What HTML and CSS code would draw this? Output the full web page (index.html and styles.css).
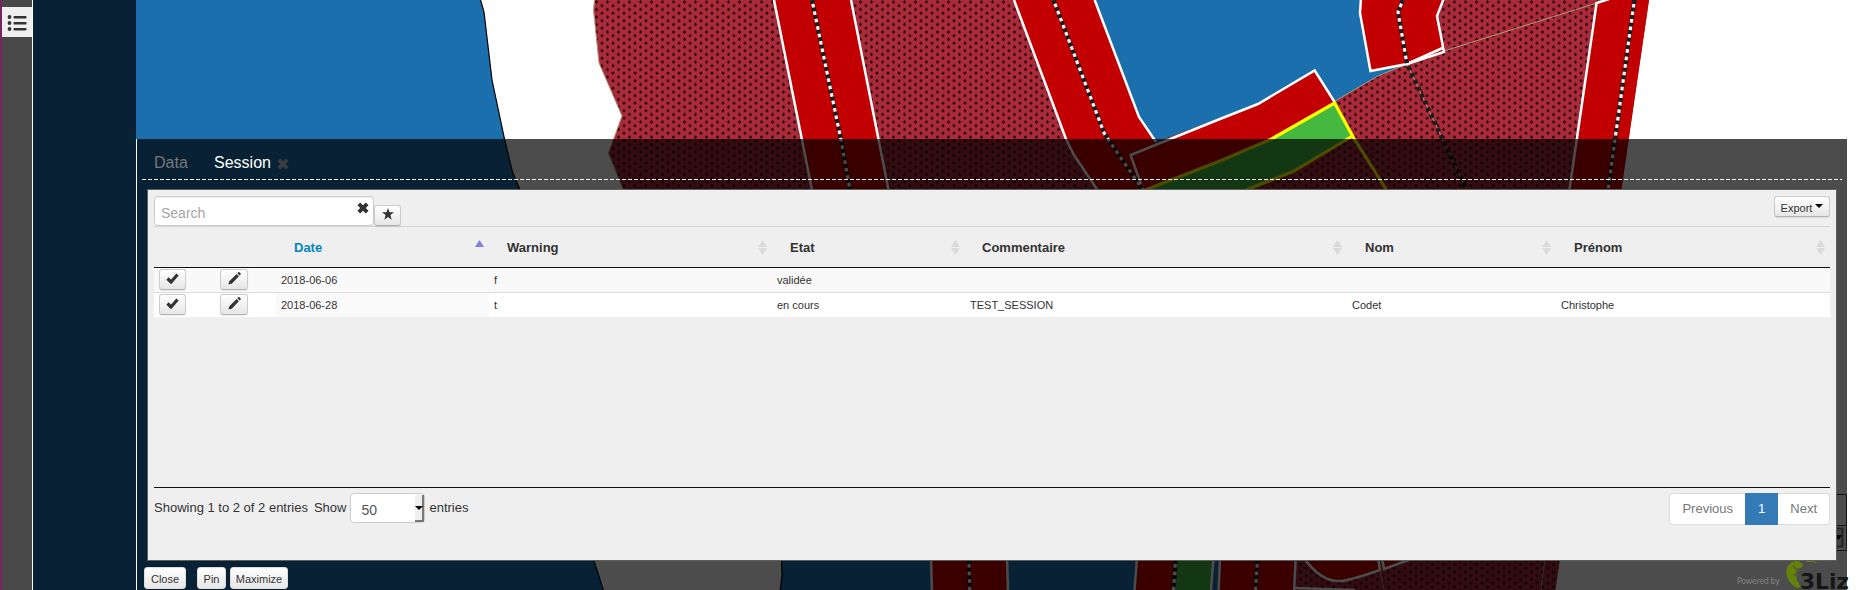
FILE: index.html
```html
<!DOCTYPE html>
<html lang="fr">
<head>
<meta charset="utf-8">
<title>Session</title>
<link rel="stylesheet" href="styles.css">
</head>
<body>
<svg class="map" viewBox="0 0 1857 590" width="1857" height="590">
  <defs>
    <pattern id="dots" width="11" height="7.5" patternUnits="userSpaceOnUse">
      <rect width="11" height="7.5" fill="#ab2a3a"/>
      <path d="M1 2h3M2.500.5v3M6.500 5.750h3M8 4.250v3" stroke="#16060a" stroke-width="1.200"/>
    </pattern>
  </defs>
  <path class="water" d="M-2-2H480L484 12 492 80 504.500 139 512.500 172 520 190 594 561 604 592H-2z"/>
  <path fill="url(#dots)" d="M594.500 0L593.500 10 599 63 622 116 608.500 153 623.500 190H1621L1649 0z"/>
  <path class="hair" d="M594.500 0L593.500 10 599 63 622 116 608.500 153 623.500 190"/>
  <path class="road" d="M774 0L812 190H888.500L851 0z"/>
  <path class="edge" d="M774 0L812 190M851 0L888.500 190"/>
  <path class="road" d="M1014 0L1066 139 1074 155 1097.500 190H1143L1156 142 1139 117 1094.700 0z"/>
  <path fill="#1c6fad" d="M1094.700 0L1139 117 1156 142 1258 104 1314.700 70.500 1334.600 102 1378 76 1407 64 1443 0z"/>
  <path class="edge" d="M1014 0L1066 139 1074 155 1097.500 190M1094.700 0L1139 117 1156 142"/>
  <path class="road" d="M1130.600 155L1220 119 1258 104 1314.700 70.500 1334.600 102 1271.600 139 1220 161 1143 190z"/>
  <path class="edge" d="M1143 190L1130.600 155 1220 119 1258 104 1314.700 70.500 1334.600 102"/>
  <path class="green" d="M1334.600 102L1271.600 139 1220 161 1143 190H1246L1293 171.500 1352.500 136z"/>
  <path class="yellow" d="M1145 190L1220 161 1271.600 139 1334.600 103 1352.500 136 1293 171.500 1246 190M1352.500 136L1386.500 190"/>
  <path class="hair" d="M1335 101L1378 76 1407 64 1466.600 190M1444 51L1597 3"/>
  <path class="road edge" d="M1361-2L1360 13 1370.500 71 1407 64 1444 52 1437 16 1444-2z"/>
  <path class="edge" d="M1407 64L1442.600 48"/>
  <path class="road" d="M1649 0L1621.400 190H1569.400L1596.600 3 1609 0z"/>
  <path class="edge" d="M1609-1L1596.600 3 1569.400 190"/>
  <path class="track" d="M812 0L841 140 850 190M1053.500 0L1104.500 134 1143 190M1403 0L1398 12 1407 64M1634.400 0L1608 190"/>
  <path class="ties" d="M812 0L841 140 850 190M1053.500 0L1104.500 134 1143 190M1403 0L1398 12 1407 64 1466.600 190M1634.400 0L1608 190"/>

  <path class="water" d="M781.500 558L782 575 780 592H1300V558z"/>
  <path class="road edge" d="M931 558L932 593H1008L1007 558z"/>
  <path class="road" d="M1137 558L1134.500 590H1173.500L1175.500 558z"/>
  <path class="green" d="M1175.500 558L1173.500 590H1211L1213.500 558z"/>
  <path class="edge" d="M1137 558L1134.500 590M1213.500 558L1211 590"/>
  <path fill="url(#dots)" d="M1295 558H1560L1555.500 590H1294z"/>
  <path class="road edge" d="M1220 558L1218.500 593H1294L1295.700 558z"/>
  <path class="road edge" d="M1304 558Q1321 582 1340 581 1348 581 1380 570L1378 558z"/>
  <path class="road edge" d="M1382 558L1384 569 1414 558z"/>
  <path class="edge" d="M1294 588L1355 590"/>
  <path class="hair" d="M1380 570L1384 590M1545 558L1541 590"/>
  <path class="track" d="M969 560L969.700 590M1175.500 560L1173.500 590M1257.500 560L1255.500 590"/>
  <path class="ties" d="M969 560L969.700 590M1175.500 560L1173.500 590M1257.500 560L1255.500 590"/>
  <path d="M1830 494.500H1846.500V550.500H1830M1830 525.500H1846" fill="none" stroke="#444" stroke-width="1"/>
  <path d="M1834 528.500H1842.500V546.500H1834" fill="#ddd" stroke="#777" stroke-width="2"/>
  <path d="M1835 535h7l-3.500 5z" fill="#000"/>
</svg>

<div class="app">
  <nav class="rail">
    <button class="rail-button" aria-label="Menu">
      <svg width="20" height="18" viewBox="0 0 20 18" fill="#333"><circle cx="2.500" cy="3" r="1.900"/><circle cx="2.500" cy="9" r="1.900"/><circle cx="2.500" cy="15" r="1.900"/><rect x="6.500" y="2" width="13" height="2.500" rx=".8"/><rect x="6.500" y="8" width="13" height="2.500" rx=".8"/><rect x="6.500" y="14" width="13" height="2.500" rx=".8"/></svg>
    </button>
  </nav>
  <aside class="side"></aside>
  <main class="dock">
    <header class="tabs">
      <span class="tab">Data</span>
      <span class="tab active">Session</span>
      <svg class="tab-close" width="12" height="12" viewBox="0 0 10 10"><path d="M1.500 1.500l7 7M8.500 1.500l-7 7" stroke="#3a3d40" stroke-width="3.200"/></svg>
    </header>
    <section class="panel">
      <div class="toolbar">
        <div class="search"><span>Search</span><svg width="12" height="12" viewBox="0 0 10 10"><path d="M1.500 1.500l7 7M8.500 1.500l-7 7" stroke="#333" stroke-width="3.200"/></svg></div>
        <button class="btn star"><svg width="12" height="12" viewBox="0 0 12 12"><path d="M6 0l1.500 4.300H12L8.400 7l1.300 4.700L6 9 2.300 11.700 3.600 7 0 4.300h4.500z" fill="#333"/></svg></button>
        <button class="btn export">Export <i></i></button>
      </div>
      <table class="grid">
        <colgroup><col class="c1"><col class="c2"><col class="c3"><col class="c4"><col class="c5"><col class="c6"><col class="c7"><col></colgroup>
        <thead><tr>
          <th></th><th></th>
          <th class="sorted"><div>Date<svg width="9" height="15" viewBox="0 0 9 15"><path d="M0 7L4.500 0 9 7z" fill="#7f7fdf"/></svg></div></th>
          <th><div>Warning<svg width="9" height="15" viewBox="0 0 9 15"><path d="M0 7L4.500 0 9 7zM0 8h9l-4.500 7z" fill="#dadada"/></svg></div></th>
          <th><div>Etat<svg width="9" height="15" viewBox="0 0 9 15"><path d="M0 7L4.500 0 9 7zM0 8h9l-4.500 7z" fill="#dadada"/></svg></div></th>
          <th><div>Commentaire<svg width="9" height="15" viewBox="0 0 9 15"><path d="M0 7L4.500 0 9 7zM0 8h9l-4.500 7z" fill="#dadada"/></svg></div></th>
          <th><div>Nom<svg width="9" height="15" viewBox="0 0 9 15"><path d="M0 7L4.500 0 9 7zM0 8h9l-4.500 7z" fill="#dadada"/></svg></div></th>
          <th><div>Prénom<svg width="9" height="15" viewBox="0 0 9 15"><path d="M0 7L4.500 0 9 7zM0 8h9l-4.500 7z" fill="#dadada"/></svg></div></th>
        </tr></thead>
        <tbody>
          <tr>
            <td><button class="btn row-btn"><svg width="13" height="11" viewBox="0 0 13 11"><path d="M1.500 5.500l3.500 3.500L11.500 1.500" fill="none" stroke="#333" stroke-width="3.200"/></svg></button></td>
            <td><button class="btn row-btn wide"><svg width="13" height="13" viewBox="0 0 13 13"><path d="M.5 12.500l.8-3.200L8.700 2l2.200 2.200L3.700 11.700zM9.300 1.300l1-1q.6-.5 1.200 0l1.100 1.100q.5.600 0 1.200l-1 1z" fill="#333"/></svg></button></td>
            <td>2018-06-06</td><td>f</td><td>validée</td><td></td><td></td><td></td>
          </tr>
          <tr>
            <td><button class="btn row-btn"><svg width="13" height="11" viewBox="0 0 13 11"><path d="M1.500 5.500l3.500 3.500L11.500 1.500" fill="none" stroke="#333" stroke-width="3.200"/></svg></button></td>
            <td><button class="btn row-btn wide"><svg width="13" height="13" viewBox="0 0 13 13"><path d="M.5 12.500l.8-3.200L8.700 2l2.200 2.200L3.700 11.700zM9.300 1.300l1-1q.6-.5 1.200 0l1.100 1.100q.5.600 0 1.200l-1 1z" fill="#333"/></svg></button></td>
            <td>2018-06-28</td><td>t</td><td>en cours</td><td>TEST_SESSION</td><td>Codet</td><td>Christophe</td>
          </tr>
        </tbody>
      </table>
      <footer class="foot">
        <span class="info">Showing 1 to 2 of 2 entries</span>
        <span>Show</span>
        <div class="select"><span>50</span><b><i></i></b></div>
        <span>entries</span>
        <div class="pager"><span>Previous</span><span class="current">1</span><span>Next</span></div>
      </footer>
    </section>
    <div class="actions">
      <button class="btn close">Close</button><button class="btn pin">Pin</button><button class="btn max">Maximize</button>
      <svg class="credits" width="115" height="29" viewBox="0 0 115 29">
        <path d="M59 0C46 2 46 19 60 27L64 26C57 17 58 10 67 5L62 0zM68 0h9q3 1 3 3-4-3-9-2z" fill="#648208"/>
        <path d="M56 5l3 3h4l4-3M60 8v4l-3 3M61 8l4 3" fill="none" stroke="#4c4c4c" stroke-width="1.200"/>
        <text x="0" y="23" class="powered" textLength="43">Powered by</text>
        <text x="63" y="28" class="brand" textLength="49" lengthAdjust="spacingAndGlyphs">3Liz</text>
      </svg>
    </div>
  </main>
</div>
</body>
</html>
```
FILE: styles.css
```css
* { box-sizing: border-box; }
body {
  margin: 0;
  width: 1857px;
  height: 590px;
  overflow: hidden;
  background: #fff;
  color: #333;
  font: 13px "Liberation Sans", Arial, sans-serif;
}

/* Map canvas behind the application */
.map { position: absolute; left: 0; top: 0; }
.water { fill: #1c6fad; stroke: #000; stroke-width: 1.2; }
.road { fill: #c20002; }
.edge { stroke: #fff; stroke-width: 2.5; }
.edge:not(.road) { fill: none; }
.green { fill: #45b840; }
.yellow { fill: none; stroke: #ff0; stroke-width: 3.2; }
.hair { fill: none; stroke: #ab9c78; stroke-width: 1; }
.track { fill: none; stroke: #fff; stroke-width: 3; }
.ties { fill: none; stroke: #1c1c1c; stroke-width: 4.5; stroke-dasharray: 4 3.6; }
.powered { font: 8px "DejaVu Sans", sans-serif; fill: #828282; }
.brand { font: 900 21px "DejaVu Sans", sans-serif; fill: #161616; }

/* Application frame */
.app { position: relative; display: flex; width: 1847px; height: 590px; }
.rail {
  width: 33px;
  padding-top: 7px;
  background: #484848;
  border-left: 2px solid #74255a;
  border-right: 1px solid #fff;
}
.rail-button {
  display: flex;
  align-items: center;
  justify-content: center;
  width: 30px;
  height: 30px;
  padding: 2px 0 0;
  border: 0;
  background: #efefef;
}
.side { width: 103px; background: #082134; }
.dock {
  flex: 1;
  margin-top: 139px;
  padding: 0 5px;
  border-left: 1px solid #fff;
  background: rgba(0, 0, 0, .7);
}
.tabs {
  display: flex;
  align-items: flex-start;
  height: 41px;
  padding: 15px 0 0 12px;
  font-size: 16px;
  line-height: 18px;
  background: repeating-linear-gradient(90deg, #fff 0 4px, transparent 4px 6px) 0 100% / 100% 1px no-repeat;
}
.tab { width: 60px; color: #777; }
.tab.active { width: 63px; color: #fff; }
.tab-close { margin-top: 4px; }

.panel {
  height: 372px;
  margin: 9px 5px 0;
  padding: 6px 6px 0;
  border: 1px solid #5c5f5c;
  background: #efefef;
}
.toolbar { display: flex; height: 31px; border-bottom: 1px solid #d4d4d4; }
.search {
  display: flex;
  justify-content: space-between;
  width: 220px;
  height: 30px;
  padding: 8px 4px 0 6px;
  border: 1px solid #ccc;
  border-radius: 4px;
  background: #fff;
  box-shadow: inset 0 1px 1px rgba(0, 0, 0, .07);
  color: #a5a5a5;
  font-size: 14px;
}
.search svg { margin-top: -3px; }

.btn {
  display: flex;
  align-items: center;
  justify-content: center;
  height: 21px;
  padding: 0;
  border: 1px solid #ccc;
  border-bottom-color: #b3b3b3;
  border-radius: 3px;
  background: linear-gradient(#fff, #e6e6e6);
  box-shadow: 0 1px 1px rgba(0, 0, 0, .08);
  color: #333;
  font: 11px "Liberation Sans", Arial, sans-serif;
}
.star { width: 27px; margin: 9px 0 0; padding-bottom: 3px; }
.export { width: 56px; margin-left: auto; padding-top: 2px; }
.export i, .select i {
  border: 4px solid transparent;
  border-top-color: #000;
  border-bottom: 0;
}
.export i { margin-left: 3px; margin-bottom: 3px; }

.grid { width: 1676px; table-layout: fixed; border-collapse: separate; border-spacing: 0; }
.c1 { width: 61px; }
.c2 { width: 61px; }
.c3 { width: 213px; }
.c4 { width: 283px; }
.c5 { width: 193px; }
.c6 { width: 382px; }
.c7 { width: 209px; }
.grid th {
  height: 41px;
  padding: 0 5px 0 18px;
  border-bottom: 1px solid #111;
  text-align: left;
  font-size: 13px;
}
.grid th div { display: flex; align-items: center; justify-content: space-between; }
.grid th:nth-child(6) { padding-left: 17px; }
.grid .sorted { color: #0085be; }
.grid td {
  height: 25px;
  padding: 0 5px;
  background: #f9f9f9;
  border-bottom: 1px solid #ddd;
  font-size: 11px;
}
.grid tr:last-child td { height: 24px; background: #fff; border-bottom: 0; }
.grid tr:last-child td:nth-child(3) { background: #fafafa; }
.row-btn { width: 27px; margin-top: -1px; padding-bottom: 3px; }
.wide { width: 28px; }

.foot {
  display: flex;
  height: 64px;
  margin-top: 170px;
  padding-top: 5px;
  border-top: 1px solid #111;
  line-height: 30px;
}
.info { margin-right: 6px; }
.select {
  display: flex;
  justify-content: space-between;
  width: 75px;
  height: 30px;
  margin: 0 4px 0 4px;
  padding-left: 10px;
  border: 1px solid #ccc;
  border-radius: 4px;
  background: #fff;
  font-size: 14px;
  line-height: 32px;
  color: #555;
}
.select b {
  display: flex;
  align-items: center;
  justify-content: center;
  width: 9px;
  margin-top: 1px;
  border-right: 2px solid #777;
  border-bottom: 2px solid #777;
  background: #efefef;
}
.pager {
  display: flex;
  height: 32px;
  margin-left: auto;
  border: 1px solid #ddd;
  border-radius: 4px;
  background: #fff;
  color: #777;
}
.pager span { padding: 0 12px; }
.pager .current { margin: -1px 0; padding: 1px 13px; background: #337ab7; color: #fff; }

.actions { display: flex; padding-left: 2px; }
.actions .btn { height: 22px; margin-top: 6px; padding-top: 2px; border-color: #ddd; }
.close { width: 42px; }
.actions .pin { width: 29px; margin-left: 11px; margin-right: 4px; }
.max { width: 58px; }
.credits { margin-left: auto; margin-right: -10px; }
```
